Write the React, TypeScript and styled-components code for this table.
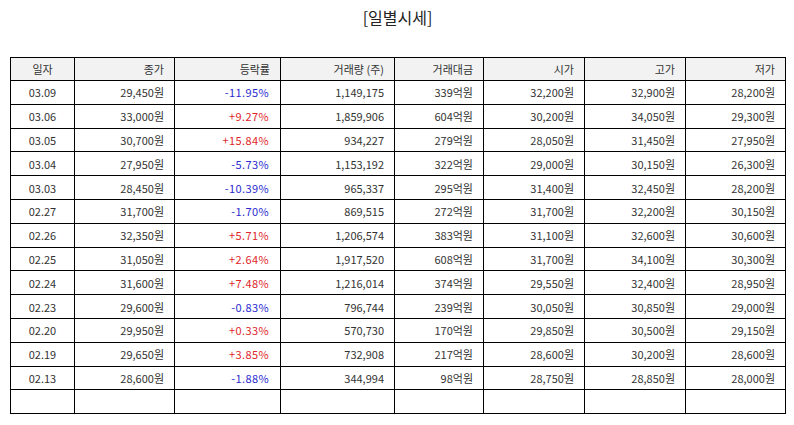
import React from 'react';
import styled, { createGlobalStyle } from 'styled-components';

const GlobalStyle = createGlobalStyle`
  html, body {
    margin: 0;
    padding: 0;
    background: #fff;
    font-family: 'Noto Sans CJK KR', 'Noto Sans', sans-serif;
  }
`;

const Page = styled.div`
  width: 794px;
  padding: 6px 9px 0 10px;
  box-sizing: border-box;
`;

const Title = styled.h2`
  margin: 0;
  height: 51px;
  text-align: center;
  font-size: 16px;
  font-weight: 400;
  color: #222;
  line-height: 22px;
`;

const Table = styled.table`
  width: 775px;
  border-collapse: collapse;
  table-layout: fixed;
  font-size: 11px;
  color: #333;
`;

const Th = styled.th<{ $center?: boolean }>`
  height: 22px;
  background: #f2f2f2;
  border: 1px solid #000;
  font-weight: 400;
  padding: 0 10px;
  text-align: ${(p) => (p.$center ? 'center' : 'right')};
`;

const Td = styled.td<{ $center?: boolean; $tone?: 'up' | 'down' }>`
  height: 22.8px;
  border: 1px solid #000;
  padding: 0 ${(p) => (p.$tone ? '11px' : '10px')};
  text-align: ${(p) => (p.$center ? 'center' : 'right')};
  letter-spacing: ${(p) => (p.$tone ? '0.4px' : '0')};
  color: ${(p) => (p.$tone === 'up' ? '#e0262b' : p.$tone === 'down' ? '#2b2bd0' : '#333')};
`;

const widths = [64, 100, 106, 114, 89, 101, 101, 100];
const headers = ['일자', '종가', '등락률', '거래량 (주)', '거래대금', '시가', '고가', '저가'];

const rows: string[][] = [
  ['03.09', '29,450원', '-11.95%', '1,149,175', '339억원', '32,200원', '32,900원', '28,200원'],
  ['03.06', '33,000원', '+9.27%', '1,859,906', '604억원', '30,200원', '34,050원', '29,300원'],
  ['03.05', '30,700원', '+15.84%', '934,227', '279억원', '28,050원', '31,450원', '27,950원'],
  ['03.04', '27,950원', '-5.73%', '1,153,192', '322억원', '29,000원', '30,150원', '26,300원'],
  ['03.03', '28,450원', '-10.39%', '965,337', '295억원', '31,400원', '32,450원', '28,200원'],
  ['02.27', '31,700원', '-1.70%', '869,515', '272억원', '31,700원', '32,200원', '30,150원'],
  ['02.26', '32,350원', '+5.71%', '1,206,574', '383억원', '31,100원', '32,600원', '30,600원'],
  ['02.25', '31,050원', '+2.64%', '1,917,520', '608억원', '31,700원', '34,100원', '30,300원'],
  ['02.24', '31,600원', '+7.48%', '1,216,014', '374억원', '29,550원', '32,400원', '28,950원'],
  ['02.23', '29,600원', '-0.83%', '796,744', '239억원', '30,050원', '30,850원', '29,000원'],
  ['02.20', '29,950원', '+0.33%', '570,730', '170억원', '29,850원', '30,500원', '29,150원'],
  ['02.19', '29,650원', '+3.85%', '732,908', '217억원', '28,600원', '30,200원', '28,600원'],
  ['02.13', '28,600원', '-1.88%', '344,994', '98억원', '28,750원', '28,850원', '28,000원'],
];

function tone(v: string): 'up' | 'down' | undefined {
  if (v.startsWith('+')) return 'up';
  if (v.startsWith('-')) return 'down';
  return undefined;
}

function App() {
  return (
    <>
      <GlobalStyle />
      <Page>
        <Title>[일별시세]</Title>
        <Table>
          <colgroup>
            {widths.map((w, i) => (
              <col key={i} style={{ width: w }} />
            ))}
          </colgroup>
          <thead>
            <tr>
              {headers.map((h, i) => (
                <Th key={h} $center={i === 0}>
                  {h}
                </Th>
              ))}
            </tr>
          </thead>
          <tbody>
            {rows.map((r) => (
              <tr key={r[0]}>
                {r.map((c, i) => (
                  <Td key={i} $center={i === 0} $tone={i === 2 ? tone(c) : undefined}>
                    {c}
                  </Td>
                ))}
              </tr>
            ))}
            <tr>
              {widths.map((_, i) => (
                <Td key={i} />
              ))}
            </tr>
          </tbody>
        </Table>
      </Page>
    </>
  );
}

export default App;
